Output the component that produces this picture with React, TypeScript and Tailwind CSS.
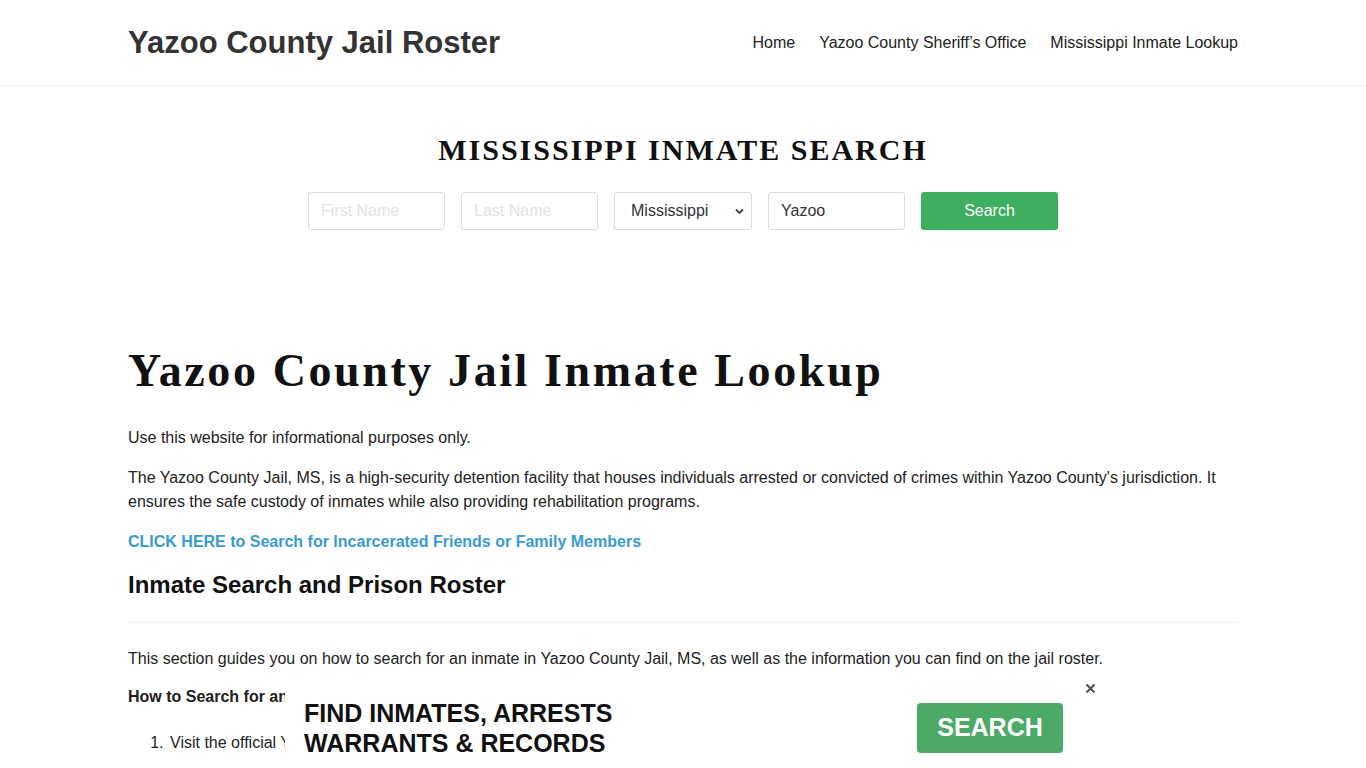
import React from "react";

export default function App() {
  const sans = { fontFamily: '"Liberation Sans", Arial, sans-serif' };
  return (
    <div className="min-h-screen bg-white text-[#222]" style={sans}>
      <header className="border-b border-[#f2f2f2]">
        <div className="mx-auto flex h-[85px] max-w-[1110px] items-center justify-between">
          <div className="pt-[1px] text-[31px] font-bold text-[#333]">Yazoo County Jail Roster</div>
          <nav className="flex gap-6 text-[16px] text-[#222]">
            <a>Home</a>
            <a>Yazoo County Sheriff’s Office</a>
            <a>Mississippi Inmate Lookup</a>
          </nav>
        </div>
      </header>

      <section className="flex flex-col items-center pt-[46px]">
        <h2
          className="text-[30px] font-bold leading-[36px] tracking-[2px] text-[#111]"
          style={{ fontFamily: '"Liberation Serif", "Times New Roman", serif' }}
        >
          MISSISSIPPI INMATE SEARCH
        </h2>
        <div className="mt-[24px] flex gap-4">
          <input
            placeholder="First Name"
            className="h-[38px] w-[137px] rounded-[3px] border border-[#dcdcdc] px-3 text-[16px] placeholder:text-[#e2e2e2] outline-none"
          />
          <input
            placeholder="Last Name"
            className="h-[38px] w-[137px] rounded-[3px] border border-[#dcdcdc] px-3 text-[16px] placeholder:text-[#e2e2e2] outline-none"
          />
          <div className="relative flex h-[38px] w-[138px] items-center rounded-[3px] border border-[#dcdcdc] pl-4 text-[16px] text-[#333]">
            Mississippi
            <svg className="absolute right-[7px] top-[15px]" width="9" height="7" viewBox="0 0 9 7">
              <path d="M1 1.5 L4.5 5 L8 1.5" fill="none" stroke="#444" strokeWidth="1.8" />
            </svg>
          </div>
          <div className="flex h-[38px] w-[137px] items-center rounded-[3px] border border-[#dcdcdc] px-3 text-[16px] text-[#333]">
            Yazoo
          </div>
          <button className="h-[38px] w-[137px] rounded-[3px] bg-[#3eae60] text-[16px] text-white">
            Search
          </button>
        </div>
      </section>

      <main className="mx-auto mt-[114px] max-w-[1110px]">
        <h1
          className="text-[46px] font-bold leading-[54px] tracking-[2.6px] text-[#111]"
          style={{ fontFamily: '"Liberation Serif", "Times New Roman", serif' }}
        >
          Yazoo County Jail Inmate Lookup
        </h1>
        <p className="mt-[28px] text-[16px] leading-[24px]">Use this website for informational purposes only.</p>
        <p className="mt-[16px] text-[16px] leading-[24px]">
          The Yazoo County Jail, MS, is a high-security detention facility that houses individuals arrested or convicted of crimes within Yazoo County's jurisdiction. It ensures the safe custody of inmates while also providing rehabilitation programs.
        </p>
        <p className="mt-[16px] text-[16px] font-bold leading-[24px] text-[#3a9bd0]">
          <a>CLICK HERE to Search for Incarcerated Friends or Family Members</a>
        </p>
        <h2 className="mt-[16px] text-[24px] font-bold leading-[30px] text-[#111]">Inmate Search and Prison Roster</h2>
        <hr className="mt-[22px] border-0 border-t border-[#eeeeee]" />
        <p className="mt-[24px] text-[16px] leading-[24px]">
          This section guides you on how to search for an inmate in Yazoo County Jail, MS, as well as the information you can find on the jail roster.
        </p>
        <p className="mt-[14px] text-[16px] font-bold leading-[24px]">How to Search for an Inmate in Yazoo County Jail</p>
        <ol className="mt-[22px] list-decimal pl-[40px] text-[16px] leading-[24px]">
          <li className="pl-[2px]">Visit the official Yazoo County Sheriff's Office website or the jail roster page.</li>
        </ol>
      </main>

      <div className="fixed bottom-0 left-0 right-0 flex justify-center">
        <div className="relative flex h-[96px] w-[796px] items-center justify-between bg-white pl-[19px] pr-[18px]">
          <div className="mt-[16px] text-[25px] font-bold leading-[30px] text-[#111]">
            <div>FIND INMATES, ARRESTS</div>
            <div>WARRANTS &amp; RECORDS</div>
          </div>
          <button className="mt-[16px] h-[50px] w-[146px] rounded-[4px] bg-[#4caa66] text-[25px] font-bold text-white">
            SEARCH
          </button>
          <svg className="absolute right-[-15px] top-[11px]" width="11" height="11" viewBox="0 0 11 11">
            <path d="M1.5 1.5 L9.5 9.5 M9.5 1.5 L1.5 9.5" stroke="#555" strokeWidth="2.2" />
          </svg>
        </div>
      </div>
    </div>
  );
}
